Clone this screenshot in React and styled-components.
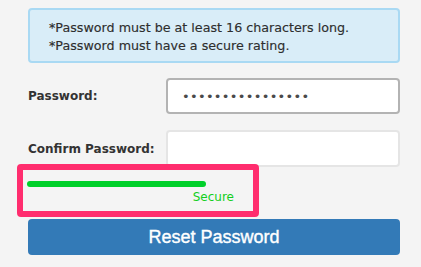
import React from "react";
import styled, { createGlobalStyle } from "styled-components";

const Global = createGlobalStyle`
  html, body { margin: 0; padding: 0; background: #f4f4f4; }
  body { font-family: "DejaVu Sans", Verdana, sans-serif; color: #333; }
`;

const Page = styled.div`
  width: 373px;
  padding: 8px 21px 0 27px;
  display: flex;
  flex-direction: column;
`;

const Alert = styled.div`
  box-sizing: border-box;
  height: 55px;
  margin-left: 1px;
  padding: 9px 0 0 19px;
  background: #d9edf8;
  border: 2px solid #a9d9f3;
  border-radius: 4px;
  font-size: 12.7px;
  line-height: 18px;
  color: #2e2e2e;
  -webkit-text-stroke: 0.15px #2e2e2e;
`;

const Line = styled.div`
  white-space: nowrap;
`;

const Row = styled.div`
  display: grid;
  grid-template-columns: 138px 1fr;
  align-items: center;
  margin-top: ${(p) => p.$top}px;
  margin-left: 1px;
`;

const Label = styled.label`
  font-weight: bold;
  font-size: 12px;
  color: #333;
`;

const Input = styled.input`
  box-sizing: border-box;
  width: 100%;
  height: ${(p) => p.$h}px;
  margin: 0;
  padding: 0 0 0 14px;
  background: #fff;
  border: 2px solid ${(p) => (p.$focus ? "#b3b3b3" : "#e5e5e5")};
  border-radius: 4px;
  font-family: "DejaVu Sans", sans-serif;
  font-size: 13px;
  letter-spacing: 0.3px;
  color: #4a4a4a;
  outline: none;
`;

const Meter = styled.div`
  position: relative;
  width: 208px;
  padding-top: 14px;
  display: flex;
  flex-direction: column;
`;

const Track = styled.div`
  width: 179px;
  height: 6px;
  border-radius: 3px;
  background: #00d02a;
`;

const Strength = styled.div`
  margin-top: 3px;
  margin-right: 1px;
  align-self: flex-end;
  font-size: 12px;
  line-height: 14px;
  color: #13cf1c;
`;

const Highlight = styled.div`
  position: absolute;
  left: -10px;
  top: -3px;
  width: 242px;
  height: 53px;
  box-sizing: border-box;
  border: 6.5px solid #ff2d6e;
  border-radius: 4px;
  pointer-events: none;
`;

const Button = styled.button`
  margin-top: 15px;
  margin-left: 1px;
  height: 36px;
  border: none;
  border-radius: 4px;
  background: #337ab7;
  color: #fff;
  font-family: "Liberation Sans", Arial, sans-serif;
  font-size: 18px;
  -webkit-text-stroke: 0.4px #fff;
  cursor: pointer;
`;

export default function App() {
  return (
    <>
      <Global />
      <Page>
        <Alert>
          <Line>*Password must be at least 16 characters long.</Line>
          <Line>*Password must have a secure rating.</Line>
        </Alert>
        <Row $top={15}>
          <Label>Password:</Label>
          <Input $h={36} $focus type="password" defaultValue="abcdefghijklmnop" readOnly />
        </Row>
        <Row $top={16}>
          <Label>Confirm Password:</Label>
          <Input $h={37} type="password" defaultValue="" readOnly />
        </Row>
        <Meter>
          <Track />
          <Strength>Secure</Strength>
          <Highlight />
        </Meter>
        <Button>Reset Password</Button>
      </Page>
    </>
  );
}
